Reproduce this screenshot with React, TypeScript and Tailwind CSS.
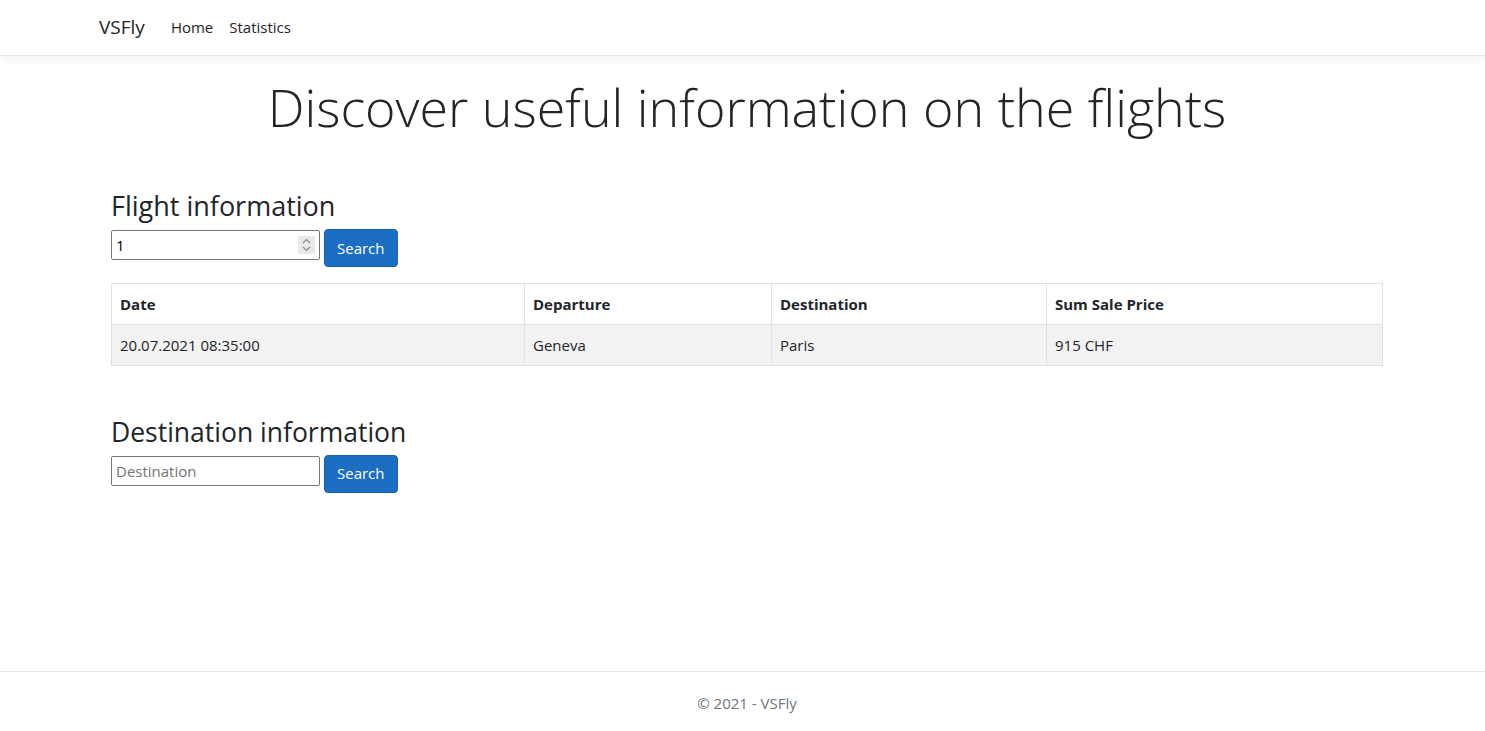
const font = { fontFamily: '"Open Sans", "Noto Sans", sans-serif' }

function SearchRow({ value, placeholder, spinner }: { value?: string; placeholder?: string; spinner?: boolean }) {
    return (
        <div className="flex items-start gap-[4px]">
            <div className="relative mt-[1px]">
                <input
                    type="text"
                    defaultValue={value}
                    placeholder={placeholder}
                    className="w-[209px] h-[30px] border border-[#767676] rounded-[2px] px-[4px] text-[15px] text-black placeholder:text-[#757575] outline-none"
                />
                {spinner && (
                    <div className="absolute right-[5px] top-[6px] w-[17px] h-[18px] bg-[#e9e9ed] flex flex-col items-center justify-center">
                        <svg width="9" height="14" viewBox="0 0 9 14" fill="none" stroke="#8a8a8a" strokeWidth="1.2">
                            <path d="M1 5 L4.5 1.5 L8 5" />
                            <path d="M1 9 L4.5 12.5 L8 9" />
                        </svg>
                    </div>
                )}
            </div>
            <button className="h-[38px] px-[12px] bg-[#1b6ec2] border border-[#1861ac] rounded-[4px] text-white text-[15px]">
                Search
            </button>
        </div>
    )
}

export default function App() {
    return (
        <div className="min-h-[731px] flex flex-col bg-white text-[#212529]" style={font}>
            <nav className="h-[56px] border-b border-[#e5e5e5] shadow-[0_4px_10px_rgba(0,0,0,0.05)] flex items-center pl-[99px]">
                <span className="text-[19px] mr-[26px]">VSFly</span>
                <a className="text-[15px] mr-[16px]">Home</a>
                <a className="text-[15px]">Statistics</a>
            </nav>

            <main className="flex-1 pl-[111px] pr-[102px]">
                <h1 className="text-center text-[52px] font-light leading-[1.2] mt-[20px]">
                    Discover useful information on the flights
                </h1>

                <h2 className="text-[27px] leading-[1.2] mt-[52px] mb-[6px]">Flight information</h2>
                <SearchRow value="1" spinner />

                <table className="w-full mt-[16px] border-collapse border border-[#dee2e6] text-[15px]">
                    <thead>
                        <tr className="h-[41px]">
                            <th className="text-left font-bold px-[8px] border border-[#dee2e6] w-[413px]">Date</th>
                            <th className="text-left font-bold px-[8px] border border-[#dee2e6] w-[247px]">Departure</th>
                            <th className="text-left font-bold px-[8px] border border-[#dee2e6] w-[275px]">Destination</th>
                            <th className="text-left font-bold px-[8px] border border-[#dee2e6]">Sum Sale Price</th>
                        </tr>
                    </thead>
                    <tbody>
                        <tr className="h-[41px] bg-[#f2f2f2]">
                            <td className="px-[8px] border border-[#dee2e6]">20.07.2021 08:35:00</td>
                            <td className="px-[8px] border border-[#dee2e6]">Geneva</td>
                            <td className="px-[8px] border border-[#dee2e6]">Paris</td>
                            <td className="px-[8px] border border-[#dee2e6]">915 CHF</td>
                        </tr>
                    </tbody>
                </table>

                <h2 className="text-[26.5px] leading-[1.2] mt-[51px] mb-[6px]">Destination information</h2>
                <SearchRow placeholder="Destination" />
            </main>

            <footer className="h-[60px] border-t border-[#e5e5e5] flex items-center justify-center pl-[9px] pt-[4px] text-[15px] text-[#6c757d]">
                © 2021 - VSFly
            </footer>
        </div>
    )
}
